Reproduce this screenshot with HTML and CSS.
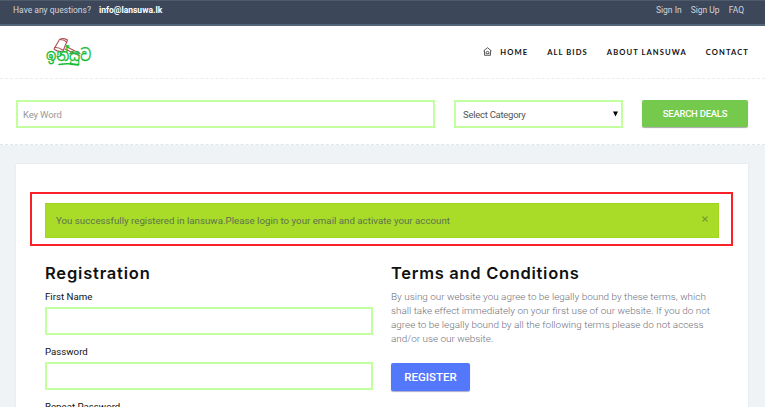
FILE: index.html
```
<!DOCTYPE html>
<html lang="en">
<head>
<meta charset="utf-8">
<title>Lansuwa - Registration</title>
<link rel="stylesheet" href="styles.css">
</head>
<body>
<div class="topbar">
  <div class="contact"><span class="question">Have any questions?</span><b>info@lansuwa.lk</b></div>
  <div class="account"><a>Sign In</a><a>Sign Up</a><a>FAQ</a></div>
</div>
<header class="header">
  <svg class="logo" viewBox="0 0 48 32" width="48" height="32">
    <g fill="none" stroke="#ad5054" stroke-width="1.1" stroke-linecap="round" stroke-linejoin="round">
      <path d="M13.500 2.500Q17 .6 21.500 3L17 14Q12 15.500 8 12Z"/>
      <path d="M13.500 2.500Q18 2.500 20.700 5M8.500 10.500Q13 10 16.500 13M20 9.500L34 16.500M19 12L33 18.500"/>
    </g>
    <text x="0" y="24" class="logo-text" textLength="45" lengthAdjust="spacingAndGlyphs">ඉන්සුව</text>
    <path d="M13 27.500Q23 26 32 28" fill="none" stroke="#12bd32" stroke-width="1.500" stroke-linecap="round"/>
  </svg>
  <nav class="nav">
    <a class="home"><svg width="9" height="9" viewBox="0 0 9 9" fill="none" stroke="#333" stroke-width=".8"><path d="M.5 4L4.500 .7L8.500 4M1.500 3.500V8.300H7.500V3.500M3 6.700V5.200Q4.500 3.500 6 5.200V6.700Z"/></svg><span>HOME</span></a>
    <a>ALL BIDS</a><a>ABOUT LANSUWA</a><a>CONTACT</a>
  </nav>
</header>
<section class="search">
  <div class="field keyword">Key Word</div>
  <div class="field category"><span>Select Category</span><svg width="5" height="6" viewBox="0 0 5 6"><path d="M0 .5H5L2.500 5.500Z"/></svg></div>
  <div class="button deals">SEARCH DEALS</div>
</section>
<main class="card">
  <div class="highlight"><div class="alert"><span>You successfully registered in lansuwa.Please login to your email and activate your account</span><svg width="6" height="6" viewBox="0 0 6 6"><path d="M.5 .5L5.500 5.500M5.500 .5L.5 5.500" stroke="#789c30" stroke-width="1.100"/></svg></div></div>
  <div class="columns">
    <form class="registration">
      <h2>Registration</h2>
      <label>First Name</label><div class="field"></div>
      <label>Password</label><div class="field"></div>
      <label>Repeat Password</label>
    </form>
    <section class="terms">
      <h2>Terms and Conditions</h2>
      <p>By using our website you agree to be legally bound by these terms, which<br>shall take effect immediately on your first use of our website. If you do not<br>agree to be legally bound by all the following terms please do not access<br>and/or use our website.</p>
      <div class="button register">REGISTER</div>
    </section>
  </div>
</main>
</body>
</html>
```
FILE: styles.css
```
* { box-sizing: border-box; }
body { margin: 0; height: 407px; overflow: hidden; background: #eff3f6; font-family: Roboto, sans-serif; font-size: 10px; color: #111; }
.topbar { height: 26px; padding: 0 21px 5px 13px; display: flex; justify-content: space-between; align-items: center; background: #3d475a; border-top: 1px solid #4d5b6c; border-bottom: 2px solid #536579; color: #d0d5dd; font-size: 8.5px; }
.contact { display: flex; gap: 8px; }
.contact b { color: #fff; }
.account { display: flex; gap: 9px; }
.header { height: 53px; padding: 0 16px 0 46px; display: flex; justify-content: space-between; align-items: center; background: #fff; border-bottom: 1px dashed #ebeded; }
.logo { margin-top: 1px; overflow: visible; }
.logo-text { fill: #12bd32; stroke: #12bd32; stroke-width: .3; font: 16px "Noto Sans Sinhala", "Noto Sans", sans-serif; }
.nav { display: flex; gap: 19px; font: 700 7.600px Lato, sans-serif; letter-spacing: 1.08px; }
.home { display: flex; gap: 8px; }
.search { height: 66px; padding: 21px 17px 0 16px; display: flex; background: #fff; border-bottom: 1px dashed #dce9e7; }
.field { height: 28px; border: 2px solid #c2ff9e; background: #fff; display: flex; align-items: center; }
.keyword { width: 419px; padding-left: 5px; color: #999; font-size: 9.5px; letter-spacing: -.15px; }
.category { width: 169px; margin-left: 19px; padding: 0 3px 0 7px; justify-content: space-between; color: #555; font-size: 9.5px; letter-spacing: -.26px; }
.button { display: flex; align-items: center; justify-content: center; color: #fff; border-radius: 2px; font-weight: 500; }
.deals { width: 106px; height: 27px; margin-left: 19px; background: #75c94d; box-shadow: 0 1px 1px #aaa; font-size: 9.5px; letter-spacing: -.25px; }
.card { width: 732px; height: 243px; overflow: hidden; margin: 19px 0 0 16px; padding: 28px 14px 0; background: #fff; box-shadow: 0 0 2px #dde4e8; }
.highlight { width: 703px; height: 54px; padding: 9px 12px 8px 13px; border: 2px solid #f92028; }
.alert { height: 35px; padding: 0 10px; border: 1px solid #a0d71c; background: #a8dc28; color: #5e7250; font-size: 9.73px; display: flex; justify-content: space-between; align-items: center; }
.alert svg { margin-top: -4px; }
.columns { display: flex; gap: 18px; padding: 17px 0 0 15px; }
.registration { width: 328px; }
h2 { margin: 0; height: 21px; font: 600 16.500px/20px Inter, sans-serif; letter-spacing: .8px; color: #111; white-space: nowrap; }
.terms h2 { letter-spacing: .7px; }
label { display: block; height: 23px; line-height: 26px; font-size: 9.7px; }
.registration .field + label { margin-top: 4px; }
.terms { width: 328px; }
.terms p { margin: 6px 0 17px; font-size: 9.92px; line-height: 14px; color: #70707c; white-space: nowrap; font-weight: 300; }
.register { width: 79px; height: 28px; background: #5478fc; font-size: 11.500px; box-shadow: 0 1px 1px #aac; }
```
